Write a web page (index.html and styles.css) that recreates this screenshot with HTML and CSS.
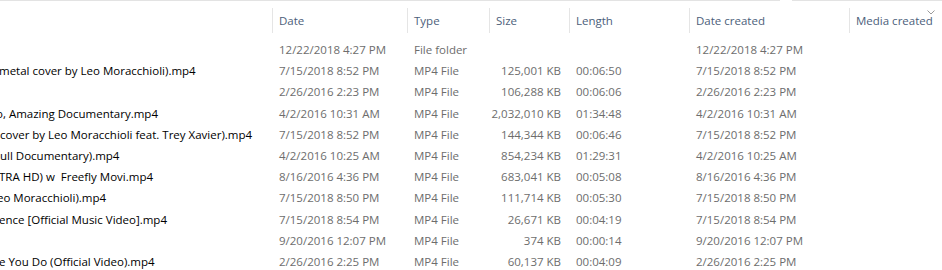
FILE: index.html
```html
<!DOCTYPE html>
<html>
<head>
<meta charset="utf-8">
<link rel="stylesheet" href="styles.css">
</head>
<body>
<div class="topline"><div class="seg seg-a"></div><div class="seg seg-b"></div></div>
<div class="view">
  <div class="header">
    <div class="hcell name"></div>
    <div class="hcell sep">Date</div>
    <div class="hcell sep">Type</div>
    <div class="hcell sep">Size</div>
    <div class="hcell sep">Length</div>
    <div class="hcell sep">Date created</div>
    <div class="hcell sep last">Media created
      <svg class="chev" width="8" height="5" viewBox="0 0 8 5"><path d="M0.5 0.5 L4 4 L7.5 0.5" fill="none" stroke="#9a9a9a" stroke-width="1"/></svg>
    </div>
  </div>
  <div class="row"><div class="c name"></div><div class="c">12/22/2018 4:27 PM</div><div class="c">File folder</div><div class="c size"></div><div class="c"></div><div class="c">12/22/2018 4:27 PM</div><div class="c"></div></div>
  <div class="row"><div class="c name"><span class="n off1">metal cover by Leo Moracchioli).mp4</span></div><div class="c">7/15/2018 8:52 PM</div><div class="c">MP4 File</div><div class="c size">125,001 KB</div><div class="c">00:06:50</div><div class="c">7/15/2018 8:52 PM</div><div class="c"></div></div>
  <div class="row"><div class="c name"></div><div class="c">2/26/2016 2:23 PM</div><div class="c">MP4 File</div><div class="c size">106,288 KB</div><div class="c">00:06:06</div><div class="c">2/26/2016 2:23 PM</div><div class="c"></div></div>
  <div class="row"><div class="c name"><span class="n off4">o, Amazing Documentary.mp4</span></div><div class="c">4/2/2016 10:31 AM</div><div class="c">MP4 File</div><div class="c size">2,032,010 KB</div><div class="c">01:34:48</div><div class="c">4/2/2016 10:31 AM</div><div class="c"></div></div>
  <div class="row"><div class="c name"><span class="n off0">cover by Leo Moracchioli feat. Trey Xavier).mp4</span></div><div class="c">7/15/2018 8:52 PM</div><div class="c">MP4 File</div><div class="c size">144,344 KB</div><div class="c">00:06:46</div><div class="c">7/15/2018 8:52 PM</div><div class="c"></div></div>
  <div class="row"><div class="c name"><span class="n off0">ull Documentary).mp4</span></div><div class="c">4/2/2016 10:25 AM</div><div class="c">MP4 File</div><div class="c size">854,234 KB</div><div class="c">01:29:31</div><div class="c">4/2/2016 10:25 AM</div><div class="c"></div></div>
  <div class="row"><div class="c name"><span class="n off1">TRA HD) w&nbsp; Freefly Movi.mp4</span></div><div class="c">8/16/2016 4:36 PM</div><div class="c">MP4 File</div><div class="c size">683,041 KB</div><div class="c">00:05:08</div><div class="c">8/16/2016 4:36 PM</div><div class="c"></div></div>
  <div class="row"><div class="c name"><span class="n off3">eo Moracchioli).mp4</span></div><div class="c">7/15/2018 8:50 PM</div><div class="c">MP4 File</div><div class="c size">111,714 KB</div><div class="c">00:05:30</div><div class="c">7/15/2018 8:50 PM</div><div class="c"></div></div>
  <div class="row"><div class="c name"><span class="n off1">ence [Official Music Video].mp4</span></div><div class="c">7/15/2018 8:54 PM</div><div class="c">MP4 File</div><div class="c size">26,671 KB</div><div class="c">00:04:19</div><div class="c">7/15/2018 8:54 PM</div><div class="c"></div></div>
  <div class="row"><div class="c name"></div><div class="c">9/20/2016 12:07 PM</div><div class="c">MP4 File</div><div class="c size">374 KB</div><div class="c">00:00:14</div><div class="c">9/20/2016 12:07 PM</div><div class="c"></div></div>
  <div class="row"><div class="c name"><span class="n off1">e You Do (Official Video).mp4</span></div><div class="c">2/26/2016 2:25 PM</div><div class="c">MP4 File</div><div class="c size">60,137 KB</div><div class="c">00:04:09</div><div class="c">2/26/2016 2:25 PM</div><div class="c"></div></div>
</div>
</body>
</html>
```
FILE: styles.css
```css
html, body {
  margin: 0;
  padding: 0;
  background: #ffffff;
  overflow: hidden;
}
body {
  width: 942px;
  height: 270px;
  font-family: "Open Sans", "Noto Sans", "Liberation Sans", sans-serif;
  font-size: 11.5px;
}
.topline {
  display: flex;
  height: 2px;
  gap: 12px;
}
.seg { background: #e3e3e3; height: 1px; }
.seg-a { width: 780px; }
.seg-b { flex: 1; }
.view {
  display: flex;
  flex-direction: column;
}
.header, .row {
  display: grid;
  grid-template-columns: 272px 135px 82px 80px 120px 160px 1fr;
}
.header {
  height: 37px;
  padding-top: 6px;
  box-sizing: border-box;
}
.hcell {
  height: 25px;
  line-height: 25px;
  color: #4c607a;
  padding-left: 6px;
  white-space: nowrap;
}
.hcell.sep { border-left: 1px solid #e5e5e5; }
.hcell.last { position: relative; }
.chev {
  position: absolute;
  left: 77px;
  top: 2px;
}
.row {
  height: 21.2px;
  line-height: 21.2px;
  color: #6d6d6d;
}
.c {
  padding-left: 7px;
  white-space: nowrap;
  overflow: hidden;
}
.c.size {
  text-align: right;
  padding-left: 0;
  padding-right: 8px;
}
.c.name {
  padding-left: 0;
  color: #000000;
}
.n { display: inline-block; }
.off0 { margin-left: 0; }
.off1 { margin-left: -1px; }
.off3 { margin-left: -3px; }
.off4 { margin-left: -4px; }
```
